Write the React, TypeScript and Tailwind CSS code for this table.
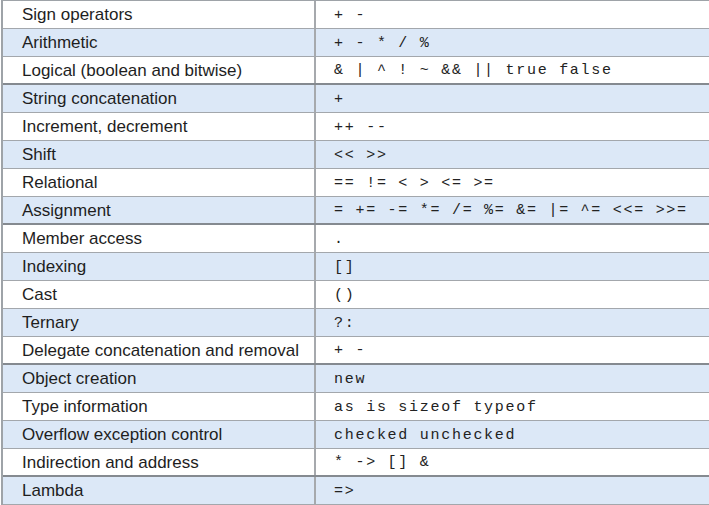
import React from "react";

const rows: { label: string; ops: string; thick?: boolean }[] = [
  { label: "Sign operators", ops: "+ -" },
  { label: "Arithmetic", ops: "+ - * / %" },
  { label: "Logical (boolean and bitwise)", ops: "& | ^ ! ~ && || true false", thick: true },
  { label: "String concatenation", ops: "+" },
  { label: "Increment, decrement", ops: "++ --" },
  { label: "Shift", ops: "<< >>" },
  { label: "Relational", ops: "== != < > <= >=" },
  { label: "Assignment", ops: "= += -= *= /= %= &= |= ^= <<= >>=", thick: true },
  { label: "Member access", ops: "." },
  { label: "Indexing", ops: "[]" },
  { label: "Cast", ops: "()" },
  { label: "Ternary", ops: "?:" },
  { label: "Delegate concatenation and removal", ops: "+ -", thick: true },
  { label: "Object creation", ops: "new" },
  { label: "Type information", ops: "as is sizeof typeof" },
  { label: "Overflow exception control", ops: "checked unchecked" },
  { label: "Indirection and address", ops: "* -> [] &", thick: true },
  { label: "Lambda", ops: "=>" },
];

export default function App() {
  return (
    <div className="w-[709px] h-[505px] bg-white overflow-hidden pl-px">
      <div className="border-t border-l-2 border-[#9ea3a8]">
        {rows.map((r, i) => (
          <div
            key={i}
            className={
              "flex h-[28px] " +
              (i % 2 === 1 ? "bg-[#dce8f7] " : "bg-white ") +
              (r.thick ? "border-b-2 border-[#858a90]" : "border-b border-[#a3a7ac]")
            }
          >
            <div
              className="w-[313px] shrink-0 flex items-center pl-[19px] pt-px border-r-2 border-[#a6a9ad] text-[17px] text-[#1e1e1e]"
              style={{ fontFamily: '"Liberation Sans", Arial, sans-serif' }}
            >
              {r.label}
            </div>
            <div
              className="flex-1 flex items-center pl-[18px] pt-[3px] text-[15px] tracking-[1.72px] text-[#222222] whitespace-pre"
              style={{ fontFamily: '"Liberation Mono", "Courier New", monospace' }}
            >
              {r.ops}
            </div>
          </div>
        ))}
      </div>
    </div>
  );
}
